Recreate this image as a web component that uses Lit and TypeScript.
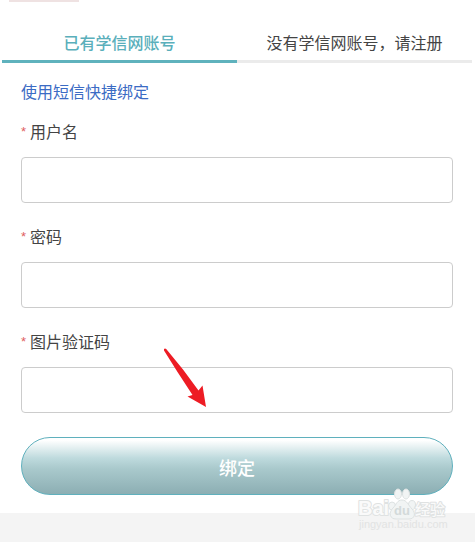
import { LitElement, html, css } from "lit";
import { customElement, state } from "lit/decorators.js";

interface Field {
  id: string;
  label: string;
  type: string;
}

const FIELDS: Field[] = [
  { id: "username", label: "用户名", type: "text" },
  { id: "password", label: "密码", type: "password" },
  { id: "captcha", label: "图片验证码", type: "text" },
];

@customElement("app-root")
export class AppRoot extends LitElement {
  @state() private tab = 0;

  static styles = css`
    :host {
      display: block;
      min-height: 100vh;
      background: #f4f4f4;
      color: #444;
      font: 16px/24px "Noto Sans CJK SC", sans-serif;
    }
    * {
      box-sizing: border-box;
    }
    .page {
      position: relative;
      background: #fff;
      padding-bottom: 18px;
    }
    .banner {
      width: 70px;
      height: 2px;
      margin-left: 9px;
      background: #efe2e2;
    }
    .tabs {
      display: grid;
      grid-template-columns: 1fr 1fr;
      padding: 0 3px 0 2px;
    }
    .tab {
      height: 61px;
      padding: 22px 0 0;
      border: 0;
      border-bottom: 3px solid #ebebeb;
      background: none;
      color: inherit;
      font: inherit;
    }
    .tab.active {
      border-color: #5fb2bd;
      color: #5aafbb;
      font-weight: 500;
    }
    .form {
      display: flex;
      flex-direction: column;
      padding: 16px 22px 0 21px;
    }
    .sms {
      align-self: flex-start;
      color: #3b6bc4;
      text-decoration: none;
    }
    .fields {
      display: flex;
      flex-direction: column;
      gap: 21px;
      margin: 16px 0 24px;
    }
    .field {
      display: flex;
      flex-direction: column;
      gap: 14px;
    }
    .label {
      display: flex;
      gap: 4px;
    }
    .star {
      color: #e06060;
      font: 13px/26px "Liberation Sans", sans-serif;
      height: 24px;
    }
    .input {
      width: 100%;
      height: 46px;
      padding: 0 12px;
      border: 1px solid #ccc;
      border-radius: 4px;
      background: #fff;
      font: inherit;
    }
    .submit {
      height: 58px;
      padding: 2px 0 0;
      border: 1px solid #5fb0bd;
      border-radius: 29px;
      background: linear-gradient(#fff 4%, #bedadd 36%, #a9c9cc 55%, #8caeb3 100%);
      color: #fff;
      font: 500 18px/26px "Noto Sans CJK SC", sans-serif;
    }
    .arrow {
      position: absolute;
      left: 163px;
      top: 347px;
      pointer-events: none;
    }
    .watermark {
      position: absolute;
      right: 24px;
      top: 487px;
      pointer-events: none;
    }
    .mark {
      fill: #fafafa;
      stroke: #dfe2e2;
      stroke-width: 2px;
      paint-order: stroke;
      stroke-linejoin: round;
    }
    .latin {
      font: bold 20px "Liberation Sans", sans-serif;
    }
    .small {
      fill: #d3dada;
      font: bold 13px "Liberation Sans", sans-serif;
    }
    .han {
      font: 500 15px "Noto Sans CJK SC", sans-serif;
    }
    .url {
      fill: #e2e3e3;
      font: 11px "Liberation Sans", sans-serif;
    }
    .paw {
      fill: #f1f4f4;
      stroke: #dde2e2;
      stroke-width: 1px;
    }
  `;

  private renderTab(text: string, index: number) {
    const active = this.tab === index;
    return html`<button
      class="tab ${active ? "active" : ""}"
      type="button"
      role="tab"
      aria-selected=${active}
      @click=${() => (this.tab = index)}
    >${text}</button>`;
  }

  render() {
    return html`
      <main class="page">
        <div class="banner"></div>
        <div class="tabs" role="tablist">
          ${this.renderTab("已有学信网账号", 0)}
          ${this.renderTab("没有学信网账号，请注册", 1)}
        </div>
        <form class="form" @submit=${(e: Event) => e.preventDefault()}>
          <a class="sms" href="#sms">使用短信快捷绑定</a>
          <div class="fields">
            ${FIELDS.map(
              (f) => html`<div class="field">
                <label class="label" for=${f.id}><span class="star">*</span>${f.label}</label>
                <input class="input" id=${f.id} type=${f.type} />
              </div>`
            )}
          </div>
          <button class="submit" type="submit">绑定</button>
        </form>

        <svg class="arrow" width="46" height="62" viewBox="0 0 46 62" aria-hidden="true">
          <path fill="#ed1c24" d="M1 2 Q2 1 3.200 2 L20 22.500 L35.500 43.500 L39.500 38.500 L43 60 L24.500 49.500 L29.500 48 L14.500 25 L1 3.500Z" />
        </svg>

        <svg class="watermark" width="94" height="48" viewBox="0 0 94 48" aria-hidden="true">
          <text class="mark latin" x="1" y="28">Bai</text>
          <g class="paw">
            <ellipse cx="35" cy="19" rx="3.500" ry="4" />
            <ellipse cx="41" cy="7" rx="3.500" ry="5" />
            <ellipse cx="49" cy="7" rx="3.500" ry="5" />
            <ellipse cx="55" cy="18" rx="3.500" ry="4.500" />
            <path d="M45 13 C40 13 40 17 36 21 C31 26 33 32 39 32 L52 32 C58 32 59 26 55 22 C51 18 50 13 45 13Z" />
          </g>
          <text class="small" x="37" y="28">du</text>
          <text class="mark han" x="58" y="28">经验</text>
          <text class="url" x="2" y="41">jingyan.baidu.com</text>
        </svg>
      </main>
    `;
  }
}
